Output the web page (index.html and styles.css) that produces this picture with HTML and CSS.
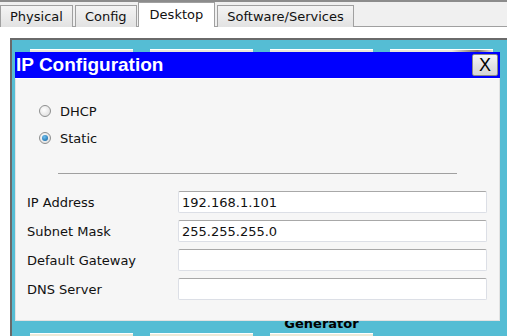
FILE: index.html
```html
<!doctype html>
<html>
	<head>
		<meta charset="utf-8"/>
		<title>IP Configuration</title>
		<link rel="stylesheet" href="styles.css">
	</head>
	<body>
		<!-- tabs -->
		<div class="tabbar">
			<div class="tab">Physical</div>
			<div class="tab">Config</div>
			<div class="tab active">Desktop</div>
			<div class="tab">Software/Services</div>
		</div>
		<div class="spacer"></div>

		<!-- desktop -->
		<div class="desktop">
			<div class="icons">
				<div class="icon"><div class="icon-img"></div><div class="icon-label"></div></div>
				<div class="icon"><div class="icon-img"></div><div class="icon-label"></div></div>
				<div class="icon"><div class="icon-img"></div><div class="icon-label">Generator</div></div>
				<div class="icon"><div class="icon-img dark"></div><div class="icon-label"></div></div>
				<div class="icon"><div class="icon-img"></div></div>
				<div class="icon"><div class="icon-img"></div></div>
				<div class="icon"><div class="icon-img"></div></div>
			</div>

			<!-- IP config window -->
			<div class="dialog">
				<div class="titlebar">
					<span class="title">IP Configuration</span>
					<span class="close">X</span>
				</div>
				<div class="panel">
					<div class="radio-row"><span class="radio"></span>DHCP</div>
					<div class="radio-row"><span class="radio checked"></span>Static</div>
					<div class="sep"></div>
					<div class="field"><label>IP Address</label><div class="input">192.168.1.101</div></div>
					<div class="field"><label>Subnet Mask</label><div class="input">255.255.255.0</div></div>
					<div class="field"><label>Default Gateway</label><div class="input"></div></div>
					<div class="field"><label>DNS Server</label><div class="input"></div></div>
				</div>
			</div>
		</div>
	</body>
</html>
```

FILE: styles.css
```css
html,body{height:100%;margin:0;padding:0;}
body{font-family:"DejaVu Sans",Verdana,sans-serif;font-size:13px;color:#111;background:#fff;overflow:hidden;}

/* tabs */
.tabbar{height:24px;background:#f0f0f0;border-top:2px solid #8c8c8c;border-bottom:1px solid #a0a0a0;display:flex;align-items:flex-end;gap:2px;}
.tab{line-height:21px;padding:0 9px;box-sizing:border-box;height:22px;background:linear-gradient(#f4f4f4,#e2e2e2);border:1px solid #a0a0a0;border-bottom:none;margin-bottom:-1px;}
.tab:nth-child(3){margin-left:-1px;}
.tab.active{height:25px;line-height:23px;background:#fff;padding:0 11px;}
.spacer{height:11px;}

/* desktop */
.desktop{position:relative;margin-left:10px;height:296px;overflow:hidden;background:#55bdd4;border-left:2px solid #6a6a6a;border-top:2px solid #6a6a6a;}
.icons{display:grid;grid-template-columns:repeat(4,103px);column-gap:17px;padding:9px 0 0 18px;}
.icon{height:284px;display:flex;flex-direction:column;}
.icon-img{height:255px;background:#ece9d8;border-top:1px solid #fff;}
.icon-img.dark{background:linear-gradient(90deg,#ece9d8 60%,#7a6a60 85%,#ece9d8);}
.icon-label{font-weight:bold;text-align:center;padding-top:11px;font-size:13px;color:#000;}

.dialog{position:absolute;left:3px;top:12px;width:485px;}
.titlebar{height:26px;background:#0000ff;display:flex;align-items:center;justify-content:space-between;}
.title{font-family:"Liberation Sans",Arial,sans-serif;font-weight:bold;font-size:19px;color:#fff;padding-left:1px;}
.close{width:24px;height:20px;margin-right:2px;border:1px solid #8a8a8a;border-radius:2px;background:linear-gradient(#f6f6f6,#e2e2e2 55%,#d6d6d6);font-family:"Liberation Sans",Arial,sans-serif;font-size:18px;line-height:20px;text-align:center;color:#000;}
.panel{background:#f6f6f6;border:1px solid #e2e2e2;border-top-color:#fff;padding:22px 0 20px 0;display:flex;flex-direction:column;}

.radio-row{flex-shrink:0;height:20px;display:flex;align-items:center;padding-left:23px;margin-bottom:7px;}
.radio{width:10px;height:10px;border:1px solid #8e8f8f;border-radius:50%;background:radial-gradient(circle at 40% 40%,#fff,#d8d8d8);margin-right:9px;position:relative;}
.radio.checked::after{content:"";position:absolute;left:2px;top:2px;width:6px;height:6px;border-radius:50%;background:radial-gradient(circle at 40% 35%,#6fc0f0,#0a5d9c);}
.sep{flex-shrink:0;margin:18px 0 17px 42px;width:399px;height:1px;background:#a0a0a0;}

.field{flex-shrink:0;display:flex;align-items:center;height:22px;margin-bottom:7px;}
.field:last-child{margin-bottom:0;}
.field label{width:151px;padding-left:11px;}
.input{width:309px;height:22px;box-sizing:border-box;background:#fff;border:1px solid #dcdfe6;border-top-color:#a8a8a8;border-radius:2px;padding:2px 3px;line-height:17px;}
```
